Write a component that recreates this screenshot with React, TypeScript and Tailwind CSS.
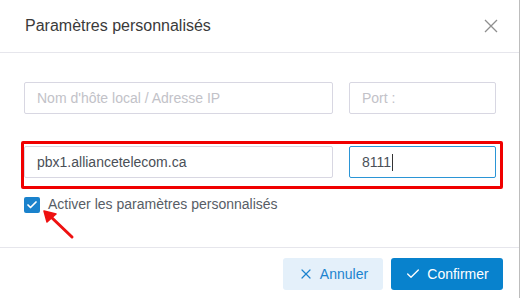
import { Check, X } from 'lucide-react';

export default function App() {
  return (
    <div className="relative w-[521px] h-[298px] bg-white overflow-hidden font-['Liberation_Sans',Arial,sans-serif]">
      <div className="w-[520px] h-full border-r border-[#bdbdbd] flex flex-col">

        {/* HEADER */}
        <div className="h-[53px] shrink-0 border-b border-[#e6e6ec] flex items-center justify-between pl-[25px] pr-[21px]">
          <h1 className="text-[16px] text-[#3a3a3a]">Paramètres personnalisés</h1>
          <svg width="14" height="14" viewBox="0 0 14 14" className="text-[#8f8f8f]">
            <path d="M1 1L13 13M13 1L1 13" stroke="currentColor" strokeWidth="1.3" fill="none" />
          </svg>
        </div>

        {/* BODY */}
        <div className="px-6 pt-[29px]">
          <div className="flex gap-4">
            <div className="w-[309px] h-[32px] shrink-0 border border-[#d8d7e2] rounded-[2px] px-3 flex items-center text-[14px] text-[#c2c2c8]">
              Nom d'hôte local / Adresse IP
            </div>
            <div className="w-[147px] h-[32px] shrink-0 border border-[#d8d7e2] rounded-[2px] px-3 flex items-center text-[14px] text-[#c2c2c8]">
              Port :
            </div>
          </div>

          <div className="flex gap-4 mt-[32px]">
            <div className="w-[309px] h-[32px] shrink-0 border border-[#d8d7e2] rounded-[2px] px-3 flex items-center text-[14px] text-[#4a4f57]">
              pbx1.alliancetelecom.ca
            </div>
            <div className="w-[147px] h-[32px] shrink-0 border border-[#2b95d6] rounded-[2px] px-3 flex items-center text-[14px] text-[#4a4f57]">
              8111<span className="w-px h-[17px] bg-[#333] ml-px" />
            </div>
          </div>

          <div className="flex items-center gap-2 mt-[16px]">
            <div className="w-4 h-4 rounded-[2px] bg-[#1a82cc] flex items-center justify-center">
              <Check className="w-3 h-3 text-white" strokeWidth={3.5} />
            </div>
            <span className="text-[14px] text-[#575d66]">Activer les paramètres personnalisés</span>
          </div>
        </div>

        {/* FOOTER */}
        <div className="mt-auto h-[51px] border-t border-[#e6e6ec] flex justify-end gap-2 pt-[10px] pr-4">
          <button className="w-[100px] h-[32px] rounded-[3px] bg-[#e4f0fa] text-[#1b83cf] text-[14px] flex items-center justify-center gap-1.5">
            <X className="w-4 h-4" strokeWidth={1.8} /> Annuler
          </button>
          <button className="w-[112px] h-[32px] rounded-[3px] bg-[#0882cd] text-white text-[14px] flex items-center justify-center gap-1.5">
            <Check className="w-4 h-4" strokeWidth={2} /> Confirmer
          </button>
        </div>
      </div>

      {/* ANNOTATIONS */}
      <div className="absolute left-[21px] top-[141px] w-[482px] h-[48px] border-[3px] border-[#f00000] rounded-[2px] pointer-events-none" />
      <svg className="absolute left-0 top-0 pointer-events-none" width="521" height="298">
        <path d="M72 237L50 216" stroke="#ee1111" strokeWidth="3" strokeLinecap="round" />
        <path d="M44 211L56 214L47 222Z" fill="#ee1111" stroke="#ee1111" strokeWidth="1.5" strokeLinejoin="round" />
      </svg>
    </div>
  );
}
